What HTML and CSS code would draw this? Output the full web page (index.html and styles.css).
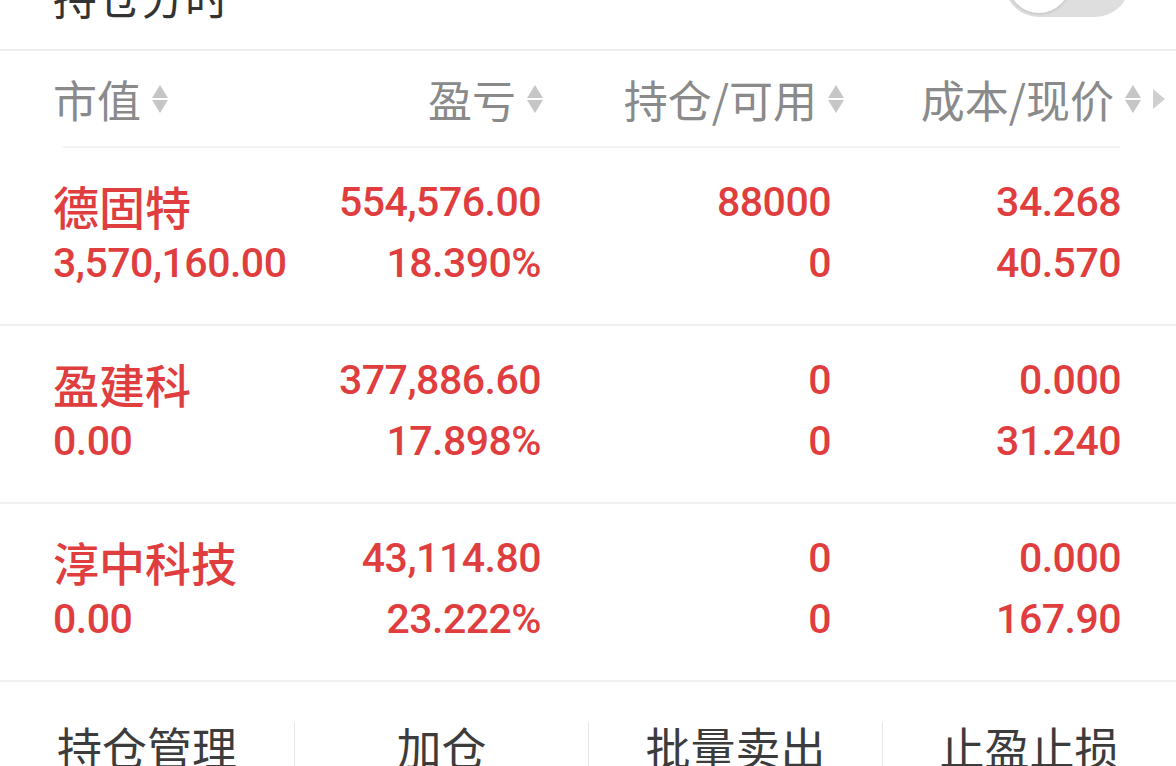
FILE: index.html
```html
<!DOCTYPE html>
<html lang="zh-CN">
<head>
  <meta charset="UTF-8" />
  <meta name="viewport" content="width=device-width, initial-scale=1.0"/>
  <title>持仓</title>
  <link rel="stylesheet" href="styles.css">
</head>
<body>
  <!-- Toggle row, mostly scrolled off the top -->
  <div class="top-bar">
    <span class="top-title">持仓分时</span>
    <span class="switch"><span class="knob"></span></span>
  </div>

  <!-- Column headers -->
  <div class="table-head">
    <span class="th th-left">市值<span class="sort"><i class="up"></i><i class="down"></i></span></span>
    <span class="th th-pnl">盈亏<span class="sort"><i class="up"></i><i class="down"></i></span></span>
    <span class="th th-hold">持仓/可用<span class="sort"><i class="up"></i><i class="down"></i></span></span>
    <span class="th th-cost">成本/现价<span class="sort"><i class="up"></i><i class="down"></i></span><i class="more"></i></span>
  </div>
  <div class="head-rule"></div>

  <!-- Positions -->
  <div class="position">
    <span class="name">德固特</span>
    <span class="num">554,576.00</span>
    <span class="num">88000</span>
    <span class="num">34.268</span>
    <span class="num num-left">3,570,160.00</span>
    <span class="num">18.390%</span>
    <span class="num">0</span>
    <span class="num">40.570</span>
  </div>
  <div class="position">
    <span class="name">盈建科</span>
    <span class="num">377,886.60</span>
    <span class="num">0</span>
    <span class="num">0.000</span>
    <span class="num num-left">0.00</span>
    <span class="num">17.898%</span>
    <span class="num">0</span>
    <span class="num">31.240</span>
  </div>
  <div class="position">
    <span class="name">淳中科技</span>
    <span class="num">43,114.80</span>
    <span class="num">0</span>
    <span class="num">0.000</span>
    <span class="num num-left">0.00</span>
    <span class="num">23.222%</span>
    <span class="num">0</span>
    <span class="num">167.90</span>
  </div>

  <!-- Bottom actions -->
  <div class="action-bar">
    <span class="action">持仓管理</span>
    <span class="action">加仓</span>
    <span class="action">批量卖出</span>
    <span class="action">止盈止损</span>
  </div>
</body>
</html>
```

FILE: styles.css
```css
/* General page styles */
body, html {
  margin: 0;
  padding: 0;
  overflow: hidden;
  height: 100%;
  background: #fff;
  font-family: "Noto Sans CJK SC", "Noto Sans", sans-serif;
}
/* Top toggle row */
.top-bar {
  height: 49px;
  display: flex;
  justify-content: space-between;
  align-items: flex-start;
  padding: 0 46px 0 53px;
  border-bottom: 2px solid #eeeeee;
}
.top-title {
  margin-top: -26px;
  font-size: 44px;
  line-height: 44px;
  color: #333;
}
.switch {
  display: flex;
  align-items: center;
  width: 126px;
  height: 70px;
  margin-top: -53px;
  padding: 0 4px;
  box-sizing: border-box;
  border-radius: 35px;
  background: #dedede;
}
.knob {
  width: 62px;
  height: 62px;
  border-radius: 50%;
  background: #fff;
  box-shadow: 0 1px 3px rgba(0, 0, 0, 0.15);
}
/* Header */
.table-head {
  height: 95px;
  display: grid;
  grid-template-columns: 198px 290px 290px 290px;
  align-items: center;
  padding: 0 55px 0 53px;
}
.th {
  display: flex;
  align-items: center;
  justify-self: end;
  font-size: 44px;
  line-height: 50px;
  color: #8a8a8a;
}
.th-left { justify-self: start; }
.th-pnl { margin-right: -2px; }
.th-hold { margin-right: -13px; }
.th-cost { margin-right: -44px; }
.sort {
  display: flex;
  flex-direction: column;
  gap: 2px;
  margin-left: 11px;
}
.sort i {
  width: 0;
  height: 0;
  border-left: 8px solid transparent;
  border-right: 8px solid transparent;
}
.sort .up { border-bottom: 13px solid #c6c6c6; }
.sort .down { border-top: 13px solid #c6c6c6; }
.more {
  width: 0;
  height: 0;
  margin-left: 12px;
  border-top: 10px solid transparent;
  border-bottom: 10px solid transparent;
  border-left: 12px solid #cfcfcf;
}
.head-rule {
  height: 2px;
  margin: 0 56px 0 63px;
  background: #f2f2f2;
}
/* Position rows */
.position {
  height: 178px;
  box-sizing: border-box;
  display: grid;
  grid-template-columns: 198px 290px 290px 290px;
  grid-template-rows: 50px 50px;
  row-gap: 11px;
  padding: 29px 55px 0 53px;
  border-bottom: 2px solid #f0f0f0;
  color: #e03e3e;
}
.name {
  margin-top: 3px;
  font-size: 46px;
  font-weight: 500;
  line-height: 50px;
  white-space: nowrap;
}
.num {
  font-family: Roboto, "Liberation Sans", sans-serif;
  font-size: 41px;
  font-weight: 500;
  line-height: 50px;
  letter-spacing: -0.5px;
  text-align: right;
  white-space: nowrap;
}
.num-left { text-align: left; }
/* Bottom action bar */
.action-bar {
  display: grid;
  grid-template-columns: repeat(4, 1fr);
  padding-top: 40px;
}
.action {
  font-size: 45px;
  line-height: 50px;
  text-align: center;
  color: #3c3c3c;
  border-left: 1px solid #e6e6e6;
}
.action:first-child { border-left: none; }
```
